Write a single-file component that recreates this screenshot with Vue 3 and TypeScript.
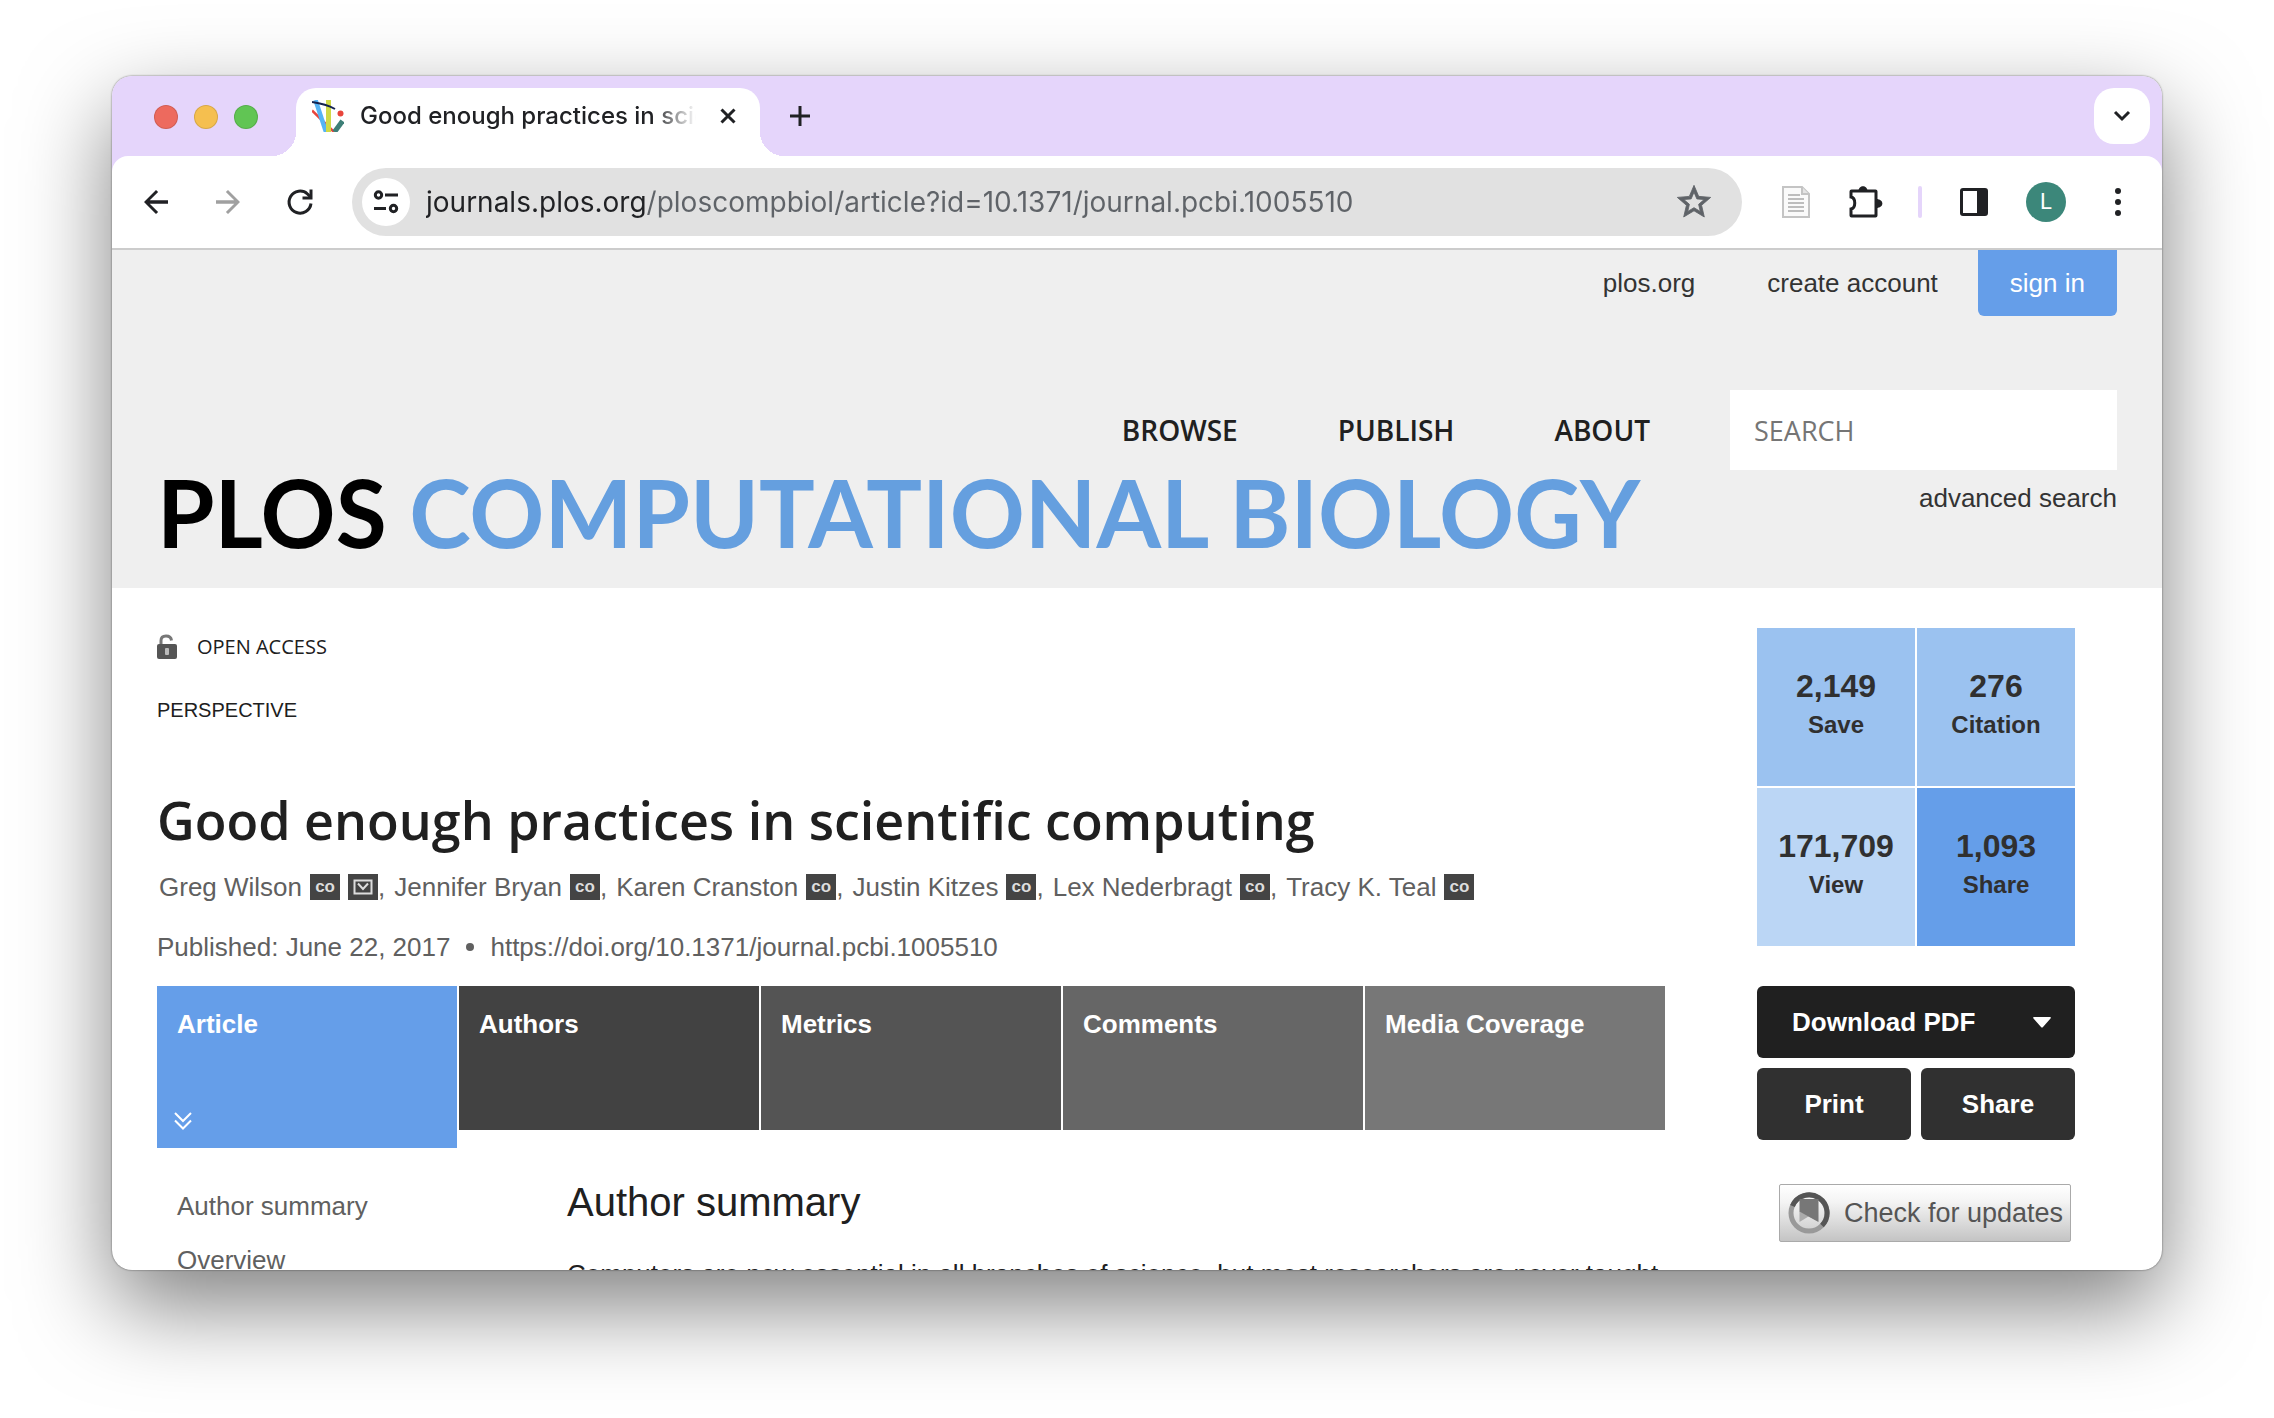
<script setup lang="ts">
import { ref } from 'vue'

interface Author {
  name: string
  corresponding?: boolean
}

const url = ref('journals.plos.org/ploscompbiol/article?id=10.1371/journal.pcbi.1005510')
const query = ref('')

const menu: string[] = ['BROWSE', 'PUBLISH', 'ABOUT']

const authors: Author[] = [
  { name: 'Greg Wilson', corresponding: true },
  { name: 'Jennifer Bryan' },
  { name: 'Karen Cranston' },
  { name: 'Justin Kitzes' },
  { name: 'Lex Nederbragt' },
  { name: 'Tracy K. Teal' },
]

const tabs: string[] = ['Article', 'Authors', 'Metrics', 'Comments', 'Media Coverage']
const sections: string[] = ['Author summary', 'Overview']

const metrics = [
  { value: '2,149', label: 'Save', tone: 'mid' },
  { value: '276', label: 'Citation', tone: 'mid' },
  { value: '171,709', label: 'View', tone: 'pale' },
  { value: '1,093', label: 'Share', tone: 'strong' },
]
</script>

<template>
  <div class="desktop">
    <div class="window">
      <div class="tabstrip">
        <div class="lights">
          <button class="light red" aria-label="Close window"></button>
          <button class="light yellow" aria-label="Minimize window"></button>
          <button class="light green" aria-label="Zoom window"></button>
        </div>
        <div class="tab">
          <svg class="favicon" viewBox="0 0 32 32" aria-hidden="true">
            <path d="M0 10.500 22 32" stroke="#e8453c" stroke-width="2.500" />
            <path d="M3.500 0 14 32" stroke="#55b4f5" stroke-width="4.500" />
            <path d="M16.500 0V32" stroke="#cfd947" stroke-width="5" />
            <path d="M0 2Q14 4 23 9" stroke="#14234f" stroke-width="2" fill="none" />
            <path d="M30.500 21 22.500 32" stroke="#3d7f77" stroke-width="5" />
            <circle cx="28.500" cy="13.500" r="3" fill="#e8453c" />
          </svg>
          <span class="tab-title">Good enough practices in scientific computing</span>
          <button class="icon-btn tab-close" aria-label="Close tab">
            <svg width="16" height="16" viewBox="0 0 16 16"><path d="M1.500 1.500 14.500 14.500M14.500 1.500 1.500 14.500" /></svg>
          </button>
        </div>
        <button class="icon-btn new-tab" aria-label="New tab">
          <svg width="20" height="20" viewBox="0 0 20 20"><path d="M10 0V20M0 10H20" /></svg>
        </button>
        <button class="icon-btn tab-search" aria-label="Search tabs">
          <svg width="18" height="12" viewBox="0 0 18 12"><path d="M2 2 9 9 16 2" /></svg>
        </button>
      </div>

      <div class="toolbar">
        <div class="nav-buttons">
          <button class="icon-btn" aria-label="Back">
            <svg width="36" height="36" viewBox="0 0 24 24"><path class="solid" d="M20 10.900H7.830l5.590-5.490L12 4l-8 8 8 8 1.410-1.410L7.830 13.100H20z" /></svg>
          </button>
          <button class="icon-btn faded" aria-label="Forward">
            <svg width="36" height="36" viewBox="0 0 24 24"><path class="solid" d="M4 10.900h12.170l-5.590-5.490L12 4l8 8-8 8-1.410-1.410L16.170 13.100H4z" /></svg>
          </button>
          <button class="icon-btn" aria-label="Reload">
            <svg width="36" height="36" viewBox="0 0 36 36"><path d="M29 19.500A11 11 0 1 1 25.500 10L28.500 13" /><path d="M29 5.500V14H20.500" /></svg>
          </button>
        </div>
        <div class="omnibox">
          <button class="icon-btn site-info" aria-label="View site information">
            <svg width="26" height="24" viewBox="0 0 26 24">
              <circle cx="5.500" cy="5" r="3.200" /><path d="M12 5H25M1 18.500H13" /><circle cx="20.500" cy="18.500" r="3.200" />
            </svg>
          </button>
          <input v-model="url" class="url" type="text" aria-label="Address" spellcheck="false" />
          <button class="icon-btn star" aria-label="Bookmark this page">
            <svg width="40" height="40" viewBox="0 0 24 24">
              <path class="solid" d="M22 9.240l-7.190-.62L12 2 9.190 8.630 2 9.240l5.460 4.730L5.820 21 12 17.270 18.180 21l-1.630-7.030zM12 15.400l-3.760 2.270 1-4.280-3.320-2.880 4.380-.38L12 6.100l1.710 4.040 4.380.38-3.320 2.880 1 4.280z" />
            </svg>
          </button>
        </div>
        <div class="tools">
          <button class="icon-btn" aria-label="Reader extension">
            <svg width="28" height="32" viewBox="0 0 28 32">
              <path d="M1 1H20L27 8V31H1Z" fill="#fafafa" stroke="#c4c4c4" stroke-width="2" />
              <path d="M20 1V8H27" fill="#e4e4e4" stroke="#c4c4c4" stroke-width="2" />
              <path d="M6 9H18M6 13H22M6 17H22M6 21H22M6 25H22" stroke="#bdbdbd" stroke-width="2" />
            </svg>
          </button>
          <button class="icon-btn" aria-label="Extensions">
            <svg width="34" height="34" viewBox="0 0 34 34">
              <path d="M2 12V6.500Q2 6 2.500 6H26.500Q27 6 27 6.500V30.500Q27 31 26.500 31H2.500Q2 31 2 30.500V24C7 23 7 13 2 12Z" />
              <path class="solid" d="M9.500 6C9.500-.5 18.500-.5 18.500 6ZM27 14C35.500 14 35.500 23 27 23Z" />
            </svg>
          </button>
          <span class="divider"></span>
          <button class="icon-btn" aria-label="Side panel">
            <svg width="30" height="30" viewBox="0 0 30 30"><rect x="2.500" y="2.500" width="25" height="25" rx="1.500" /><path class="solid" d="M18 2H28V28H18Z" /></svg>
          </button>
          <button class="avatar" aria-label="Profile">L</button>
          <button class="icon-btn" aria-label="Menu">
            <svg width="8" height="28" viewBox="0 0 8 28"><circle class="solid" cx="4" cy="3" r="3" /><circle class="solid" cx="4" cy="14" r="3" /><circle class="solid" cx="4" cy="25" r="3" /></svg>
          </button>
        </div>
      </div>

      <header class="site-header">
        <nav class="user-nav" aria-label="Account">
          <a href="#">plos.org</a>
          <a href="#">create account</a>
          <a href="#" class="sign-in">sign in</a>
        </nav>
        <div class="masthead">
          <div class="brand">
            <nav class="menu" aria-label="Main">
              <a v-for="item in menu" :key="item" href="#">{{ item }}</a>
            </nav>
            <a href="#" class="logo"><span class="logo-plos">PLOS</span> COMPUTATIONAL BIOLOGY</a>
          </div>
          <form class="search" @submit.prevent>
            <input v-model="query" type="text" placeholder="SEARCH" aria-label="Search" />
            <a href="#">advanced search</a>
          </form>
        </div>
      </header>

      <main class="page">
        <div class="article">
          <p class="access">
            <svg width="20" height="26" viewBox="0 0 20 26" aria-hidden="true">
              <path d="M4 12V6.500Q4 2 9 2T14.500 6.500" fill="none" stroke="#777" stroke-width="3" />
              <rect y="10" width="20" height="15" rx="2" fill="#555" />
              <rect x="8" y="14" width="4" height="7" rx="1" fill="#bbb" />
            </svg>
            OPEN ACCESS
          </p>
          <p class="kind">PERSPECTIVE</p>
          <h1>Good enough practices in scientific computing</h1>
          <ul class="authors">
            <li v-for="(author, i) in authors" :key="author.name">
              <a href="#">{{ author.name }}</a>
              <span class="badge">co</span>
              <span v-if="author.corresponding" class="badge">
                <svg width="20" height="16" viewBox="0 0 20 16" role="img" aria-label="Corresponding author">
                  <path d="M1.500 1.500H18.500V14.500H1.500ZM5 4.500 10 10 15 4.500" fill="none" stroke="#ddd" stroke-width="2" />
                </svg>
              </span><span v-if="i < authors.length - 1" class="comma">,</span>
            </li>
          </ul>
          <p class="published">
            <span>Published: June 22, 2017</span>
            <span class="dot"></span>
            <a href="#">https://doi.org/10.1371/journal.pcbi.1005510</a>
          </p>
          <nav class="article-tabs" aria-label="Article sections">
            <a v-for="(tab, i) in tabs" :key="tab" href="#" :class="'shade-' + i">
              {{ tab }}
              <svg v-if="i === 0" width="20" height="18" viewBox="0 0 20 18" aria-hidden="true">
                <path d="M2 1 10 9 18 1M2 8.500 10 16.500 18 8.500" fill="none" stroke="#fff" stroke-width="2" />
              </svg>
            </a>
          </nav>
          <div class="columns">
            <nav class="toc" aria-label="Contents">
              <a v-for="section in sections" :key="section" href="#">{{ section }}</a>
            </nav>
            <section class="body-text">
              <h2>Author summary</h2>
              <p>Computers are now essential in all branches of science, but most researchers are never taught</p>
            </section>
          </div>
        </div>

        <aside class="sidebar">
          <div class="metrics">
            <a v-for="m in metrics" :key="m.label" href="#" :class="m.tone">
              <strong>{{ m.value }}</strong>
              <span>{{ m.label }}</span>
            </a>
          </div>
          <div class="actions">
            <button class="download">
              Download PDF
              <svg width="18" height="11" viewBox="0 0 18 11" aria-hidden="true"><path d="M1 0H17Q18.500 .500 17.500 1.500L10 10Q9 11 8 10L.500 1.500Q-.5 .500 1 0Z" fill="#fff" /></svg>
            </button>
            <button>Print</button>
            <button>Share</button>
          </div>
          <button class="crossmark">
            <svg width="42" height="42" viewBox="0 0 42 42" aria-hidden="true">
              <circle cx="21" cy="21" r="18" fill="none" stroke="#999" stroke-width="5" />
              <path d="M4.500 14A18 18 0 1 1 34 33.500" fill="none" stroke="#555" stroke-width="5" />
              <path d="M11.500 19 30 28V29.500L20.500 24.500 11.500 30Z" fill="#aaa" />
              <path d="M11.500 7H30.500V30L11.500 19.500Z" fill="#777" />
            </svg>
            Check for updates
          </button>
        </aside>
      </main>
    </div>
  </div>
</template>

<style>
body {
  margin: 0;
  background: #fff;
}
</style>

<style scoped>
* {
  box-sizing: border-box;
}

button,
input {
  border: 0;
  padding: 0;
  background: none;
  font: inherit;
  color: inherit;
}

a {
  color: inherit;
  text-decoration: none;
}

h1,
h2,
p,
ul {
  margin: 0;
  padding: 0;
}

.desktop {
  height: 100vh;
  padding: 76px 112px 148px;
  overflow: hidden;
  font-family: 'Liberation Sans', Arial, sans-serif;
  font-size: 26px;
  line-height: 32px;
  color: #202020;
}

.window {
  display: flex;
  flex-direction: column;
  height: 100%;
  overflow: hidden;
  border-radius: 20px;
  background: #fff;
  box-shadow: 0 0 2px rgba(0, 0, 0, 0.6), 0 36px 90px rgba(0, 0, 0, 0.5);
}

/* Browser chrome */
.icon-btn {
  display: flex;
  align-items: center;
  justify-content: center;
  flex: none;
  width: 36px;
  height: 36px;
}

.icon-btn svg {
  flex: none;
  fill: none;
  stroke: #202124;
  stroke-width: 3;
}

.icon-btn .solid {
  fill: #202124;
  stroke: none;
}

.faded .solid {
  fill: #a0a0a0;
}

.tabstrip {
  display: flex;
  flex: none;
  height: 80px;
  padding: 12px 12px 0 42px;
  background: #e5d5fb;
}

.lights {
  display: flex;
  gap: 16px;
  padding-top: 17px;
}

.light {
  width: 24px;
  height: 24px;
  border: 1px solid rgba(0, 0, 0, 0.12);
  border-radius: 50%;
}

.red {
  background: #ed6a5e;
}

.yellow {
  background: #f5bf4f;
}

.green {
  background: #61c554;
}

.tab {
  position: relative;
  display: flex;
  align-items: center;
  width: 464px;
  height: 68px;
  margin-left: 38px;
  padding: 0 14px 12px 16px;
  border-radius: 20px 20px 0 0;
  background: #fff;
}

.tab::before,
.tab::after {
  content: '';
  position: absolute;
  bottom: 0;
  width: 24px;
  height: 24px;
}

.tab::before {
  right: 100%;
  background: radial-gradient(circle at 0 0, transparent 24px, #fff 24px);
}

.tab::after {
  left: 100%;
  background: radial-gradient(circle at 100% 0, transparent 24px, #fff 24px);
}

.favicon {
  flex: none;
  width: 32px;
  height: 32px;
}

.tab-title {
  flex: 1;
  min-width: 0;
  margin-left: 16px;
  overflow: hidden;
  white-space: nowrap;
  font-family: Inter, sans-serif;
  font-size: 24px;
  font-weight: 500;
  color: #202124;
  mask-image: linear-gradient(90deg, #000 calc(100% - 44px), transparent);
}

.tab-close {
  margin-left: 14px;
}

.new-tab {
  margin: 10px 0 0 22px;
}

.tab-search {
  width: 56px;
  height: 56px;
  margin-left: auto;
  border-radius: 20px;
  background: #fff;
}

.toolbar {
  display: flex;
  align-items: center;
  flex: none;
  height: 94px;
  padding: 0 26px;
  border-bottom: 2px solid #ccc;
  border-radius: 16px 16px 0 0;
  background: #fff;
  box-shadow: 0 -16px 0 #e5d5fb;
  clip-path: inset(0);
}

.nav-buttons {
  display: flex;
  gap: 36px;
}

.omnibox {
  display: flex;
  align-items: center;
  flex: 1;
  min-width: 0;
  height: 68px;
  margin: 0 36px 0 34px;
  padding: 0 28px 0 10px;
  border-radius: 34px;
  background: #e1e1e1;
}

.site-info {
  width: 48px;
  height: 48px;
  border-radius: 50%;
  background: #fff;
}

.url {
  flex: 1;
  min-width: 0;
  height: 40px;
  margin: 0 16px;
  font-family: Inter, sans-serif;
  font-size: 28px;
  color: transparent;
  background: linear-gradient(90deg, #202124 220px, #5f6368 220px);
  background-clip: text;
}

.star {
  width: 40px;
  height: 40px;
}

.star .solid {
  fill: #5f6368;
  stroke: #5f6368;
  stroke-width: 0.5;
}

.tools {
  display: flex;
  align-items: center;
  gap: 34px;
}

.divider {
  width: 4px;
  height: 32px;
  border-radius: 2px;
  background: #e5d5fb;
}

.avatar {
  width: 40px;
  height: 40px;
  border-radius: 50%;
  background: #3c877a;
  color: #fff;
  font-family: Roboto, sans-serif;
  font-size: 22px;
}

/* Journal header */
.site-header {
  flex: none;
  height: 338px;
  padding: 0 45px;
  background: #efefef;
}

.user-nav {
  display: flex;
  justify-content: flex-end;
  align-items: center;
  height: 66px;
  gap: 72px;
  color: #333;
}

.sign-in {
  height: 66px;
  margin-left: -32px;
  padding: 0 32px;
  border-radius: 0 0 6px 6px;
  background: #659ee9;
  color: #fff;
  line-height: 66px;
}

.masthead {
  display: flex;
  justify-content: space-between;
  gap: 80px;
  padding-top: 74px;
}

.brand {
  flex: 1;
  min-width: 0;
}

.menu {
  display: flex;
  justify-content: flex-end;
  gap: 100px;
  font-family: 'Open Sans', sans-serif;
  font-size: 28px;
  font-weight: 600;
  line-height: 80px;
}

.logo {
  display: block;
  font-family: Lato, sans-serif;
  font-size: 93px;
  font-weight: 700;
  line-height: 84px;
  white-space: nowrap;
  color: #659fdf;
}

.logo-plos {
  color: #000;
}

.search {
  display: flex;
  flex-direction: column;
  align-items: flex-end;
  gap: 12px;
  width: 387px;
  color: #333;
}

.search input {
  width: 100%;
  height: 80px;
  padding: 0 24px;
  background: #fff;
  font-family: 'Open Sans', sans-serif;
  font-size: 27px;
}

.search input::placeholder {
  color: #757575;
  opacity: 1;
}

/* Article */
.page {
  display: grid;
  grid-template-columns: minmax(0, 1fr) 318px;
  gap: 92px;
  padding: 40px 87px 0 45px;
}

.access {
  display: flex;
  align-items: center;
  gap: 20px;
  margin-top: 3px;
  font-family: 'Open Sans', sans-serif;
  font-size: 20px;
}

.kind {
  margin-top: 31px;
  font-size: 20px;
}

h1 {
  margin-top: 64px;
  font-family: 'Open Sans', sans-serif;
  font-size: 52px;
  font-weight: 600;
  line-height: 60px;
  white-space: nowrap;
}

.authors {
  display: flex;
  gap: 9px;
  margin-top: 21px;
  padding-left: 2px;
  list-style: none;
  white-space: nowrap;
  color: #606060;
}

.authors li {
  display: flex;
  align-items: center;
}

.badge {
  display: flex;
  align-items: center;
  justify-content: center;
  width: 30px;
  height: 26px;
  margin-left: 8px;
  background: #444;
  color: #ddd;
  font-size: 17px;
  font-weight: 700;
}

.published {
  display: flex;
  align-items: center;
  gap: 16px;
  margin-top: 28px;
  color: #606060;
}

.dot {
  width: 8px;
  height: 8px;
  border-radius: 50%;
  background: #606060;
}

.article-tabs {
  display: grid;
  grid-template-columns: repeat(5, 1fr);
  align-items: start;
  gap: 2px;
  margin-top: 23px;
  font-weight: 700;
  color: #fff;
}

.article-tabs a {
  display: flex;
  flex-direction: column;
  justify-content: space-between;
  height: 144px;
  padding: 22px 20px 18px;
}

.article-tabs svg {
  margin-left: -4px;
}

.article-tabs .shade-0 {
  height: 162px;
  background: #659ee9;
}

.shade-1 {
  background: #424242;
}

.shade-2 {
  background: #545454;
}

.shade-3 {
  background: #666;
}

.shade-4 {
  background: #777;
}

.columns {
  display: grid;
  grid-template-columns: 410px minmax(0, 1fr);
  margin-top: 32px;
}

.toc {
  display: flex;
  flex-direction: column;
  gap: 22px;
  padding: 10px 20px;
  color: #606060;
}

h2 {
  font-size: 40px;
  font-weight: 400;
  line-height: 44px;
}

.body-text p {
  margin-top: 34px;
  white-space: nowrap;
}

/* Sidebar */
.metrics {
  display: grid;
  grid-template-columns: 1fr 1fr;
  gap: 2px;
}

.metrics a {
  display: flex;
  flex-direction: column;
  align-items: center;
  gap: 7px;
  height: 158px;
  padding-top: 42px;
  font-size: 24px;
  font-weight: 700;
  color: #303030;
}

.metrics strong {
  font-size: 32px;
}

.mid {
  background: #9bc2f0;
}

.pale {
  background: #bbd6f5;
}

.strong {
  background: #659ee9;
}

.actions {
  display: grid;
  grid-template-columns: 1fr 1fr;
  gap: 10px;
  margin-top: 40px;
}

.actions button {
  height: 72px;
  border-radius: 6px;
  background: #303030;
  color: #fff;
  font-weight: 700;
}

.actions .download {
  display: flex;
  align-items: center;
  justify-content: space-between;
  grid-column: 1 / -1;
  padding: 0 24px 0 35px;
  background: #202020;
}

.crossmark {
  display: flex;
  align-items: center;
  gap: 14px;
  width: 292px;
  height: 58px;
  margin: 44px 0 0 22px;
  padding-left: 8px;
  border: 1px solid #aaa;
  border-radius: 2px;
  background: linear-gradient(#fff, #f4f4f4 30%, #c4c4c4);
  color: #555;
  font-size: 27px;
  white-space: nowrap;
}
</style>
